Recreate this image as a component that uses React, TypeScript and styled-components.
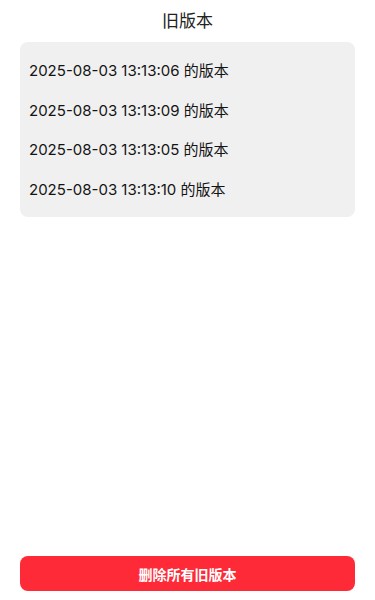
import React from 'react';
import styled, { createGlobalStyle } from 'styled-components';

const GlobalStyle = createGlobalStyle`
  html, body {
    margin: 0;
    padding: 0;
    background: #ffffff;
  }

  body {
    font-family: Inter, "Noto Sans CJK SC", sans-serif;
    color: #222222;
  }
`;

const Page = styled('div')`
  display: flex;
  flex-direction: column;
  min-height: 100vh;
  box-sizing: border-box;
  padding: 0 20px 9px;
`;

const Title = styled('h1')`
  margin: 0;
  height: 42px;
  line-height: 42px;
  font-size: 17px;
  font-weight: 400;
  text-align: center;
  color: #222222;
`;

const VersionList = styled('ul')`
  list-style: none;
  margin: 0;
  padding: 9px 9px 8px;
  background: #f0f0f0;
  border-radius: 8px;
`;

const VersionItem = styled('li')`
  height: 39.5px;
  line-height: 39.5px;
  font-size: 15px;
  font-weight: 400;
  color: #141414;
  white-space: nowrap;
`;

const Spacer = styled('div')`
  flex: 1;
`;

const DeleteButton = styled('button')`
  width: 100%;
  height: 35px;
  margin: 0;
  border: none;
  border-radius: 8px;
  background: #ff2a38;
  color: #ffffff;
  font-family: inherit;
  font-size: 14px;
  font-weight: 700;
  cursor: pointer;
`;

const versions = [
  '2025-08-03 13:13:06',
  '2025-08-03 13:13:09',
  '2025-08-03 13:13:05',
  '2025-08-03 13:13:10',
];

const App: React.FC = () => {
  return (
    <>
      <GlobalStyle />
      <Page>
        <Title>旧版本</Title>
        <VersionList>
          {versions.map((time) => (
            <VersionItem key={time}>{time} 的版本</VersionItem>
          ))}
        </VersionList>
        <Spacer />
        <DeleteButton>删除所有旧版本</DeleteButton>
      </Page>
    </>
  );
};

export default App;
